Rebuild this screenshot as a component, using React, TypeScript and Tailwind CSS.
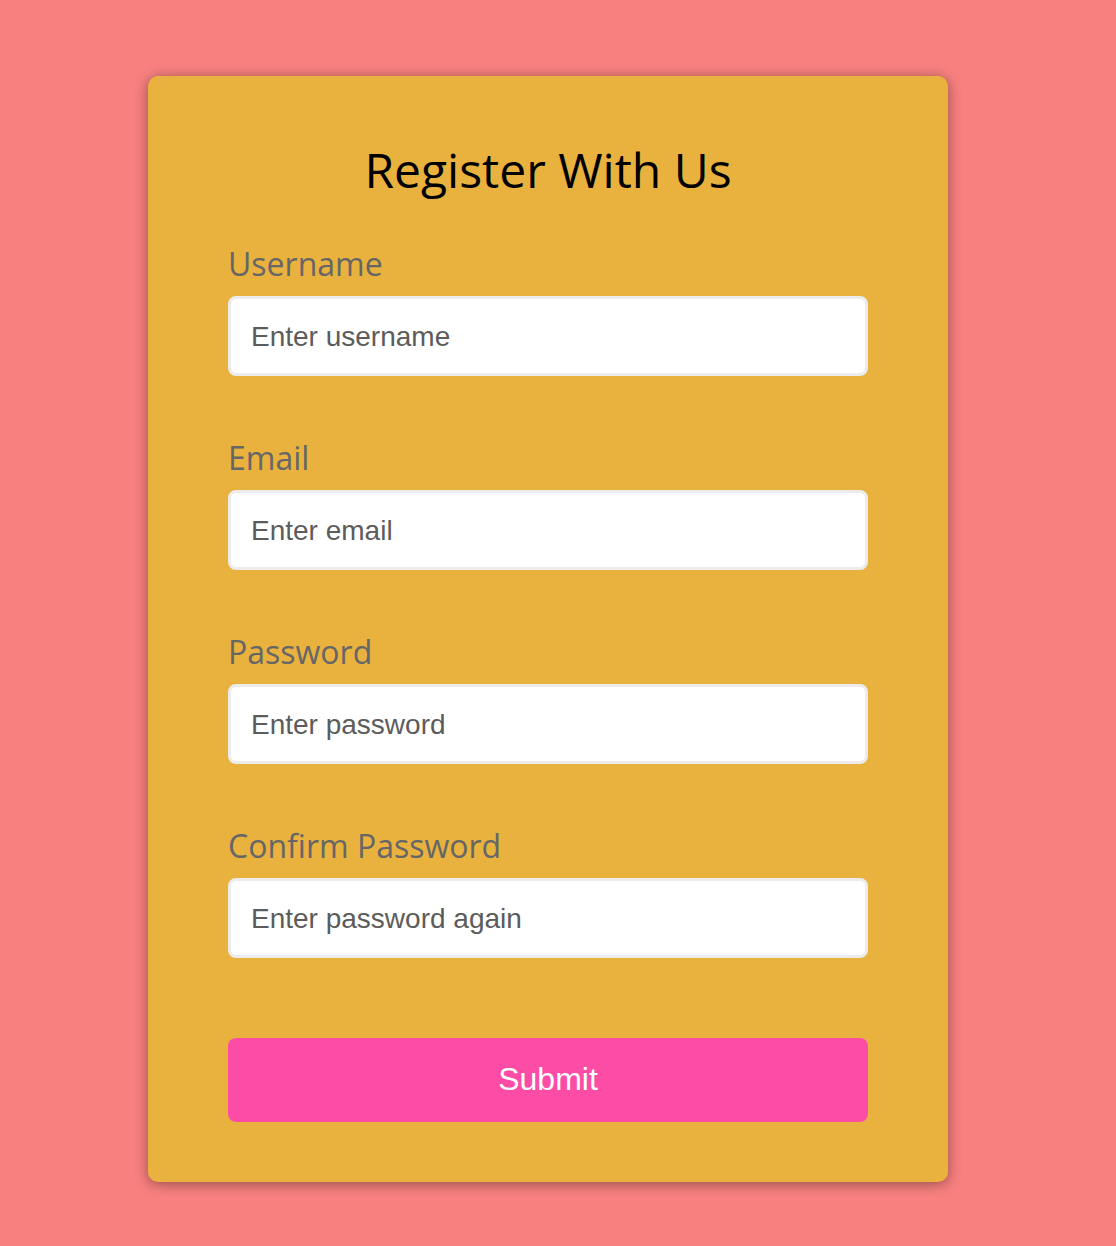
const fields = [
  { label: "Username", type: "text", placeholder: "Enter username" },
  { label: "Email", type: "email", placeholder: "Enter email" },
  { label: "Password", type: "password", placeholder: "Enter password" },
  { label: "Confirm Password", type: "password", placeholder: "Enter password again" },
]

export default function App() {
  return (
    <div className="min-h-[1246px] bg-[#f8817f] flex justify-center pt-[76px] pr-[20px]">
      <div className="w-[800px] h-[1106px] bg-[#e9b23e] rounded-[10px] shadow-[0_2px_14px_rgba(0,0,0,0.4)] px-[80px] pt-[61px]">
        <h2 className="text-center text-[48px] leading-[66px] text-black font-['Open_Sans',sans-serif]">
          Register With Us
        </h2>
        <form className="mt-[39px]" onSubmit={(e) => e.preventDefault()}>
          {fields.map((f) => (
            <div key={f.label} className="h-[194px]">
              <label className="block text-[32px] leading-[44px] text-[#666] font-['Open_Sans',sans-serif]">
                {f.label}
              </label>
              <input
                type={f.type}
                placeholder={f.placeholder}
                className="mt-[10px] block w-full h-[80px] bg-white border-[3px] border-[#ececec] rounded-[8px] px-[20px] pt-[2px] text-[28px] text-[#333] placeholder:text-[#5c5c5c] font-['Liberation_Sans',Arial,sans-serif] outline-none"
              />
            </div>
          ))}
          <button
            type="submit"
            className="mt-[20px] block w-full h-[84px] bg-[#fd4ca6] rounded-[8px] pb-[3px] text-white text-[32px] font-['Liberation_Sans',Arial,sans-serif]"
          >
            Submit
          </button>
        </form>
      </div>
    </div>
  )
}
